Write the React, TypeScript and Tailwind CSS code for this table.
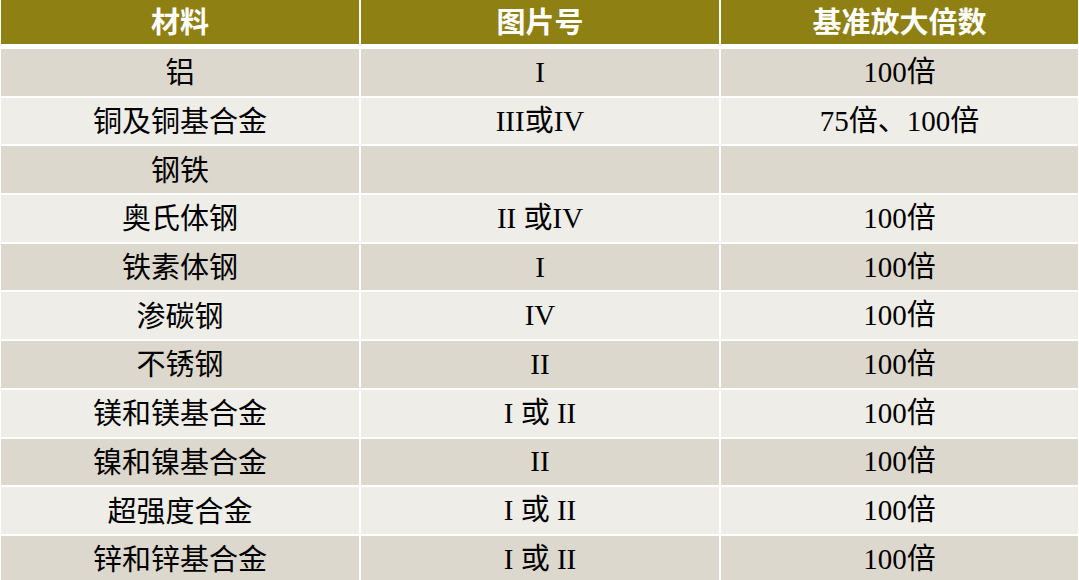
import React from "react";

const rows: [string, string, string][] = [
  ["铝", "I", "100倍"],
  ["铜及铜基合金", "III或IV", "75倍、100倍"],
  ["钢铁", "", ""],
  ["奥氏体钢", "II 或IV", "100倍"],
  ["铁素体钢", "I", "100倍"],
  ["渗碳钢", "IV", "100倍"],
  ["不锈钢", "II", "100倍"],
  ["镁和镁基合金", "I 或 II", "100倍"],
  ["镍和镍基合金", "II", "100倍"],
  ["超强度合金", "I 或 II", "100倍"],
  ["锌和锌基合金", "I 或 II", "100倍"],
];

export default function App() {
  return (
    <div className="w-[1079px] h-[580px] overflow-hidden bg-white px-[1px]">
      <div className="grid grid-cols-[358px_358px_357px] gap-x-[2px] h-[44px] bg-white">
        {["材料", "图片号", "基准放大倍数"].map((h) => (
          <div
            key={h}
            className="bg-[#8f8014] flex items-center justify-center pb-[3px] text-white font-bold text-[29px] leading-none"
            style={{ fontFamily: '"Noto Sans CJK SC", sans-serif' }}
          >
            {h}
          </div>
        ))}
      </div>
      <div className="mt-[5px] flex flex-col gap-y-[2px]">
        {rows.map((r, i) => {
          const bg = i % 2 === 0 ? "bg-[#dcd8cd]" : "bg-[#eeede8]";
          return (
            <div key={i} className="grid grid-cols-[358px_358px_357px] gap-x-[2px] h-[46.7px] shrink-0">
              <div
                className={`${bg} flex items-center justify-center pb-[3px] text-black text-[29px] leading-none`}
                style={{ fontFamily: '"Noto Sans CJK SC", sans-serif' }}
              >
                {r[0]}
              </div>
              <div
                className={`${bg} flex items-center justify-center text-black text-[29px] leading-none whitespace-pre`}
                style={{ fontFamily: '"Liberation Serif", "Noto Sans CJK SC", serif' }}
              >
                {r[1]}
              </div>
              <div
                className={`${bg} flex items-center justify-center text-black text-[29px] leading-none`}
                style={{ fontFamily: '"Liberation Serif", "Noto Sans CJK SC", serif' }}
              >
                {r[2]}
              </div>
            </div>
          );
        })}
      </div>
    </div>
  );
}
